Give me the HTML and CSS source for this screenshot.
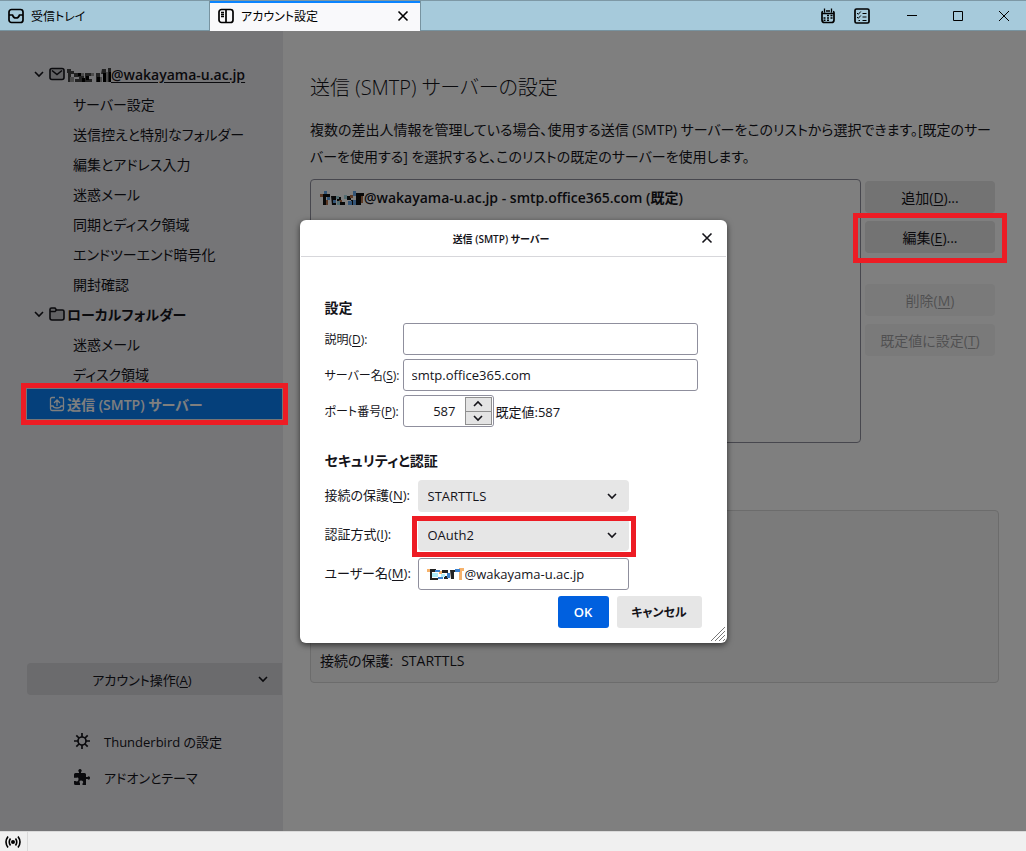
FILE: index.html
```html
<!DOCTYPE html>
<html lang="ja">
<head>
<meta charset="utf-8">
<title>アカウント設定</title>
<link rel="stylesheet" href="styles.css">
</head>
<body>
<div class="window">
  <header class="tabbar">
    <button class="tab" type="button">
      <svg class="icon" viewBox="0 0 16 16"><rect x="1" y="1.5" width="14" height="13" rx="2.5"/><path d="M1 7h3.500c.5 2 1.500 3 3.500 3s3-1 3.500-3H15"/></svg>
      <span>受信トレイ</span>
    </button>
    <div class="tab tab-active">
      <svg class="icon" viewBox="0 0 16 16"><rect x="1" y="1.500" width="14" height="13" rx="2.500"/><path d="M8 1.500v13"/><path class="thin" d="M3 4.500h3M3 6.500h3M3 8.500h3"/></svg>
      <span>アカウント設定</span>
      <button class="tab-close" type="button" aria-label="タブを閉じる"><svg class="icon-small" viewBox="0 0 12 12"><path d="M1.500 1.500l9 9M10.500 1.500l-9 9"/></svg></button>
    </div>
    <div class="tools">
      <button class="tool" type="button" aria-label="カレンダー"><svg class="icon" viewBox="0 0 16 16"><path d="M2 5.500V12q0 2.500 2.500 2.500h7Q14 14.500 14 12V5.500M2 6V4.500Q2 3.500 3 3.500M14 6V4.500Q14 3.500 13 3.500M6 3h4"/><path class="thin" d="M4.500 0.500v4M11.500 0.500v4M2 5.500h12"/><path class="dots" d="M7 7.500h2M10.500 7.500h2M3.500 10h2M7 10h2M10.500 10h2M3.500 12.300h2M7 12.300h2"/></svg></button>
      <button class="tool" type="button" aria-label="ToDo"><svg class="icon" viewBox="0 0 16 16"><rect x="1" y="1" width="14" height="14" rx="1.500"/><path class="fine" d="M3 5l1.300 1.300L6.800 3.500M3 9l1.300 1.300L6.800 7.500M4.500 12.500h1.500M8.500 5.500h4M8.500 9h4M8.500 12.500h4"/></svg></button>
    </div>
    <div class="window-buttons">
      <button class="tool" type="button" aria-label="最小化"><svg class="icon-window" viewBox="0 0 12 12"><path d="M1 5.500h10"/></svg></button>
      <button class="tool" type="button" aria-label="最大化"><svg class="icon-window" viewBox="0 0 12 12"><path d="M1.500 1.500h9v9h-9z"/></svg></button>
      <button class="tool" type="button" aria-label="閉じる"><svg class="icon-window" viewBox="0 0 12 12"><path d="M1 1l10 10M11 1L1 11"/></svg></button>
    </div>
  </header>

  <div class="content">
    <nav class="sidebar">
      <ul class="tree">
        <li class="account"><svg class="twisty" viewBox="0 0 12 12"><path d="M2 4l4 4 4-4"/></svg><svg class="icon soft" viewBox="0 0 16 16"><rect class="fill" x="1" y="2.500" width="14" height="11" rx="2"/><path d="M3 4.500l5 4 5-4"/></svg><a class="account-name underlined" href="#account"><svg class="mosaic" viewBox="0 0 44 14"><path fill="#444" d="M0 1h4v2h3v3H4v8H1V5H0zM7 5h7v2h3v7H8v-3h4V9H7zM18 5h6v3h-3v3h4v3h-7zM29 5h4v9h-4zM35 1h4v13h-3V6h-2zM41 0h3v14h-3z"/><path fill="#999" d="M3 9h4v5H3zM13 5h4v3h-4zM24 5h3v3h-3zM32 9h3v5h-3zM39 4h2v10h-2z"/><path fill="#000" d="M11 5h3v3h-3zM15 10h3v4h-3zM19 8h3v4h-3zM30 9h3v5h-3zM36 5h3v9h-3zM42 4h2v10h-2z"/></svg>@wakayama-u.ac.jp</a></li>
        <li><a href="#server">サーバー設定</a></li>
        <li><a href="#copies">送信控えと特別なフォルダー</a></li>
        <li><a href="#addressing">編集とアドレス入力</a></li>
        <li><a href="#junk">迷惑メール</a></li>
        <li><a href="#sync">同期とディスク領域</a></li>
        <li><a href="#e2e">エンドツーエンド暗号化</a></li>
        <li><a href="#receipts">開封確認</a></li>
        <li class="account"><svg class="twisty" viewBox="0 0 12 12"><path d="M2 4l4 4 4-4"/></svg><svg class="icon soft" viewBox="0 0 16 16"><path class="fill" d="M1 12V3.500Q1 2 2.500 2H6l1.500 2h6Q15 4 15 5.500V12q0 2-2 2H3q-2 0-2-2zM1 5.500h5L7.500 4"/></svg><a class="account-name" href="#local">ローカルフォルダー</a></li>
        <li><a href="#local-junk">迷惑メール</a></li>
        <li><a href="#local-disk">ディスク領域</a></li>
        <li class="account selected marked mark-row"><span class="twisty"></span><svg class="icon" viewBox="0 0 16 16"><path class="thin" d="M6 1.500H3q-1.500 0-1.500 1.500v9.500Q1.500 14.500 3 14.500h10q1.500 0 1.500-2V3q0-1.500-1.500-1.500h-3M1.500 10h2.500q.5 2 4 2t4-2h2.500M8 10V4M5 7L8 4l3 3"/></svg><a class="account-name" href="#smtp">送信 (SMTP) サーバー</a></li>
      </ul>
      <div class="sidebar-foot">
        <button class="account-actions" type="button"><span>アカウント操作(<u>A</u>)</span><svg class="twisty" viewBox="0 0 12 12"><path d="M2 4l4 4 4-4"/></svg></button>
        <a class="foot-link" href="#prefs"><svg class="icon" viewBox="0 0 16 16"><circle cx="8" cy="8" r="4"/><path d="M8 0v4M8 12v4M0 8h4M12 8h4M2.300 2.300l2.700 2.700M11 11l2.700 2.700M2.300 13.700L5 11M11 5l2.700-2.700"/></svg>Thunderbird の設定</a>
        <a class="foot-link" href="#addons"><svg class="icon solid" viewBox="0 0 16 16"><path d="M0 5.500Q0 4 1.500 4H5V3q-1-1-.5-2Q5 0 6 0t1.500 1q.5 1-.5 2v1h3.500Q12 4 12 5.500V8h1.500q1-1 1.800-.5T16 9t-.7 1.500-1.800-.5H12v6H8.500v-1.500q1-1 .5-2T7 11.500t-1.500 1 .5 2V16H1.500Q0 16 0 14.500V12h1.500q1 .8 2 .3T4.500 10t-1-1.500-2 .3H0z"/></svg>アドオンとテーマ</a>
      </div>
    </nav>

    <main class="main">
      <h1>送信 (SMTP) サーバーの設定</h1>
      <p class="intro">複数の差出人情報を管理している場合、使用する送信 (SMTP) サーバーをこのリストから選択できます。[既定のサー<br>バーを使用する] を選択すると、このリストの既定のサーバーを使用します。</p>
      <div class="servers">
        <ul class="server-list">
          <li><svg class="mosaic" viewBox="0 0 44 14"><path fill="#111" d="M2 3h8v3H6v8H3V5H2zM11 5h5v9h-4zM17 6h4v4h-4zM20 11h5v3h-5zM27 5h4v4h-4zM31 9h3v5h-3zM36 2h8v3h-3v9h-5z"/><path fill="#67a8ec" d="M4 0h3v3H4zM7 6h3v3H7zM13 9h3v3h-3zM28 10h4v4h-4zM33 0h3v5h-3zM33 9h3v5h-3z"/><path fill="#b7734b" d="M0 3h3v3H0zM6 9h2v5H6zM19 9h3v2h-3zM30 4h3v3h-3zM41 5h2v7h-2z"/><path fill="#a6dbe5" d="M16 5h3v3h-3zM17 10h3v4h-3zM24 4h3v4h-3z"/></svg>@wakayama-u.ac.jp - smtp.office365.com (既定)</li>
        </ul>
        <div class="server-actions">
          <button class="button" type="button">追加(<u>D</u>)...</button>
          <button class="button marked mark-edit" type="button">編集(<u>E</u>)...</button>
          <button class="button button-spaced" type="button" disabled>削除(<u>M</u>)</button>
          <button class="button" type="button" disabled>既定値に設定(<u>T</u>)</button>
        </div>
      </div>
      <section class="details"><dl><dt>接続の保護:</dt><dd>STARTTLS</dd></dl></section>
    </main>

    <div class="overlay">
      <form class="dialog" role="dialog" aria-labelledby="dialog-title">
        <div class="dialog-head">
          <h2 id="dialog-title">送信 (SMTP) サーバー</h2>
          <button class="dialog-close" type="button" aria-label="閉じる"><svg class="icon-small" viewBox="0 0 12 12"><path d="M1.500 1.500l9 9M10.500 1.500l-9 9"/></svg></button>
        </div>
        <div class="dialog-body">
          <h3>設定</h3>
          <div class="fields fields-server">
            <label for="desc">説明(<u>D</u>):</label><input id="desc" class="box" type="text">
            <label for="host">サーバー名(<u>S</u>):</label><input id="host" class="box" type="text" value="smtp.office365.com">
            <label for="port">ポート番号(<u>P</u>):</label>
            <div class="port">
              <div class="box spin"><input id="port" type="text" inputmode="numeric" value="587"><div class="spin-buttons"><button type="button" aria-label="増やす"><svg viewBox="0 0 12 8"><path d="M2 6l4-4 4 4"/></svg></button><button type="button" aria-label="減らす"><svg viewBox="0 0 12 8"><path d="M2 2l4 4 4-4"/></svg></button></div></div>
              <span>既定値:587</span>
            </div>
          </div>
          <h3 class="second">セキュリティと認証</h3>
          <div class="fields fields-auth">
            <label for="sec">接続の保護(<u>N</u>):</label>
            <div class="picker"><select id="sec"><option>STARTTLS</option></select><svg class="twisty" viewBox="0 0 12 12"><path d="M2 4l4 4 4-4"/></svg></div>
            <label for="auth">認証方式(<u>I</u>):</label>
            <div class="picker marked mark-auth"><select id="auth"><option>OAuth2</option></select><svg class="twisty" viewBox="0 0 12 12"><path d="M2 4l4 4 4-4"/></svg></div>
            <label for="user">ユーザー名(<u>M</u>):</label>
            <div class="box user"><svg class="mosaic mosaic-user" viewBox="0 0 38 12"><path fill="#f6b26b" d="M0 1h3v3H0zM12 3h3v3h-3zM24 4h3v4h-3zM32 0h5v3h-2v9h-3z"/><path fill="#222" d="M3 1h6v3H5v6h6v2H3zM15 2h6v3h-6zM17 8h4v3h-4zM23 2h7v2h-3v7h-3z"/><path fill="#3b80cc" d="M8 2h5v2H8zM11 9h5v2h-5zM20 5h3v5h-3zM28 1h5v3h-5z"/><path fill="#aeecfa" d="M5 5h6v4H5zM14 6h4v3h-4z"/></svg><input id="user" type="text" value="@wakayama-u.ac.jp"></div>
          </div>
          <div class="dialog-buttons"><button class="ok" type="submit">OK</button><button class="cancel" type="button">キャンセル</button></div>
        </div>
        <svg class="grip" viewBox="0 0 16 16"><path d="M1 15L15 1M5 15L15 5M9 15l6-6M13 15l2-2"/></svg>
      </form>
    </div>
  </div>

  <footer class="statusbar"><span class="status-icon"><svg class="icon" viewBox="0 0 16 16"><circle class="core" cx="8" cy="8" r="2"/><path d="M5.500 4.500q-2.500 3.500 0 7M10.500 4.500q2.500 3.500 0 7M3 2.500q-4 5.500 0 11M13 2.500q4 5.500 0 11"/></svg></span></footer>
</div>
</body>
</html>
```
FILE: styles.css
```css
* { box-sizing: border-box; }
html, body { margin: 0; height: 100%; }
body {
  font-family: "Open Sans", "Noto Sans CJK JP", sans-serif;
  font-size: 14px;
  font-feature-settings: "palt";
  color: #15141a;
}
button, input, select { font: inherit; font-feature-settings: inherit; color: inherit; margin: 0; padding: 0; border: 0; background: none; }
h1, h2, h3, p, ul, dl, dd { margin: 0; padding: 0; }
ul { list-style: none; }
a { color: inherit; text-decoration: none; }
u { text-underline-offset: 2px; }
svg { fill: none; stroke: currentColor; flex: none; display: block; }

.window { display: flex; flex-direction: column; min-height: 100vh; }
.icon { width: 16px; height: 16px; stroke-width: 1.700; }
.icon .thin { stroke-width: 1.300; }
.icon .fine { stroke-width: 1; }
.icon .dots { stroke-width: 1.400; }
.icon-small { width: 12px; height: 12px; stroke-width: 1.600; }
.icon-window { width: 12px; height: 12px; stroke-width: 1; }
.twisty { width: 12px; height: 12px; stroke-width: 1.600; flex: none; }
.solid { fill: currentColor; stroke: none; }
.soft { stroke-width: 1.600; }
.soft .fill { fill: #c4c4c8; }
.mosaic { display: inline-block; width: 44px; height: 14px; stroke: none; vertical-align: -2px; }

.tabbar { display: flex; height: 31px; background: #a6cadb; border-top: 1px solid #7d98a5; border-bottom: 1px solid #7793a0; font-size: 12px; color: #000; }
.tab { display: flex; align-items: center; gap: 7px; width: 209px; padding: 0 8px; }
.tab-active { width: 212px; margin-bottom: -1px; background: #f9f9fb; border: 1px solid #7793a0; border-width: 0 1px; box-shadow: inset 0 2px #0a84ff; }
.tab-close { margin-left: auto; padding: 3px; }
.tools { display: flex; gap: 18px; margin-left: auto; align-items: center; }
.tool { display: grid; place-items: center; }
.window-buttons { display: flex; gap: 34px; align-items: center; padding: 0 16px 0 36px; }

.content { position: relative; flex: 1; display: flex; }
.sidebar { flex: none; width: 283px; padding: 28px 1px 36px 27px; background: #eaeaee; display: flex; flex-direction: column; }
.tree li { display: flex; align-items: center; height: 30px; padding-left: 46px; white-space: nowrap; }
.tree .account { padding-left: 6px; font-weight: 600; }
.account .icon { margin: 0 2px 0 4px; }
.account-name.underlined { text-decoration: underline; text-underline-offset: 2px; }
.tree .selected { background: #0a80f6; color: #fff; }
.sidebar-foot { margin-top: auto; display: flex; flex-direction: column; font-size: 13px; }
.account-actions { display: flex; align-items: center; height: 32px; margin-bottom: 28px; padding-right: 13px; background: #d6d6da; border-radius: 4px 0 0 4px; }
.account-actions span { flex: 1; }
.foot-link { display: flex; align-items: center; gap: 14px; height: 36px; padding-left: 47px; }

.main { flex: 1; min-width: 0; padding: 41px 27px 40px 27px; background: #fff; }
.main h1 { font-size: 20px; line-height: 32px; font-weight: 300; }
.intro { margin: 12px 0 9px; line-height: 27px; white-space: nowrap; }
.servers { display: flex; gap: 4px; padding-right: 4px; }
.server-list { flex: 1; min-height: 264px; border: 1px solid #8f8f9d; border-radius: 4px; padding: 4px 9px; font-weight: 600; }
.server-list li { line-height: 28px; white-space: nowrap; }
.server-actions { display: flex; flex-direction: column; gap: 8px; width: 130px; padding-top: 2px; }
.button { height: 32px; border-radius: 4px; background: #e6e6e6; }
.button:disabled { opacity: .4; }
.button-spaced { margin-top: 23px; }
.details { display: flex; align-items: flex-end; min-height: 173px; margin-top: 67px; padding: 7px 9px; border: 1px solid #d8d8d8; border-radius: 4px; background: #f6f6f6; }
.details dl { display: flex; gap: 8px; line-height: 28px; }

.marked { position: relative; }
.marked::after { content: ""; position: absolute; border: 5px solid #ed1c24; z-index: 10; pointer-events: none; }
.mark-row::after { inset: -6px; }
.mark-edit::after { inset: -8px -12px -10px; }
.mark-auth::after { inset: -3px -7px -6px -6px; }

.overlay { position: absolute; inset: 0; z-index: 5; display: flex; align-items: center; justify-content: center; padding-top: 1px; background: rgba(0, 0, 0, .5); }
.dialog { position: relative; width: 427px; background: #fff; border-radius: 6px; box-shadow: 0 2px 6px rgba(0, 0, 0, .6); font-size: 13px; }
.dialog-head { display: flex; align-items: center; height: 37px; margin: 0 1px; padding: 0 12px 0 2px; border-bottom: 1px solid #d7d7db; }
.dialog-head h2 { flex: 1; text-align: center; font-size: 10px; font-weight: 600; }
.dialog-close { padding: 1px; }
.dialog-body { padding: 39px 25px 15px; }
.dialog-body h3 { font-size: 14px; line-height: 24px; font-weight: 600; }
.dialog-body .second { margin-top: 22px; }
.fields { display: grid; grid-template-columns: 78px 1fr; row-gap: 4px; margin: 3px 4px 0 0; align-items: center; white-space: nowrap; }
.fields-server label { font-size: 12px; }
.fields-auth { grid-template-columns: 93px 211px; row-gap: 7px; margin-top: 7px; }
.fields-auth label { padding-bottom: 3px; }
.box { height: 32px; min-width: 0; border: 1px solid #8f8f9d; border-radius: 3px; padding: 0 8px; background: #fff; }
.port { display: flex; gap: 2px; align-items: center; }
.spin { display: flex; width: 91px; padding: 1px 1px 1px 0; }
.spin input { flex: 1; min-width: 0; text-align: right; padding-right: 9px; }
.spin-buttons { display: grid; width: 27px; border: 1px solid #8f8f8f; background: #e4e4e4; }
.spin-buttons button { display: grid; place-items: center; }
.spin-buttons button + button { border-top: 1px solid #8f8f8f; }
.spin-buttons svg { width: 12px; height: 8px; stroke-width: 1.600; }
.picker { display: grid; align-items: center; }
.picker select { grid-area: 1 / 1; height: 32px; padding: 0 10px; appearance: none; background: #e6e6e6; border-radius: 4px; }
.picker > .twisty { grid-area: 1 / 1; justify-self: end; margin-right: 11px; pointer-events: none; }
.user { display: flex; align-items: center; }
.user input { flex: 1; min-width: 0; }
.mosaic-user { width: 38px; height: 12px; }
.dialog-buttons { display: flex; justify-content: flex-end; gap: 8px; margin-top: 6px; font-weight: 600; }
.dialog-buttons button { height: 32px; border-radius: 3px; }
.ok { width: 51px; background: #0060df; color: #fff; }
.dialog-buttons .cancel { width: 85px; background: #e6e6e6; font-size: 12px; }
.grip { position: absolute; right: 1px; bottom: 1px; width: 16px; height: 16px; stroke: #777; stroke-width: 1; }

.statusbar { height: 20px; background: #f0f0f0; border-top: 1px solid #dadada; }
.status-icon { display: flex; align-items: center; width: 28px; height: 100%; padding-left: 5px; border-right: 1px solid #dadada; color: #000; }
.status-icon .icon { stroke-width: 1.600; }
.core { fill: currentColor; stroke: none; }
```
